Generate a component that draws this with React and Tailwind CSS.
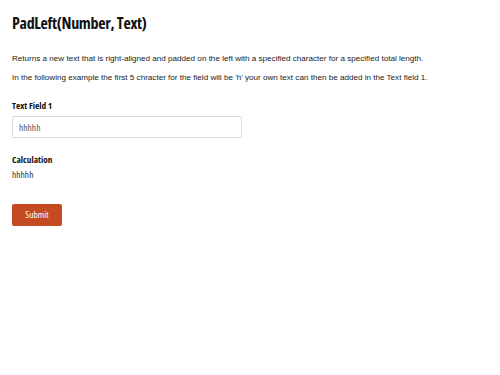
export default function App() {
  return (
    <div className="bg-white min-h-[375px] px-3 pt-[13px] text-[#222] font-['Liberation_Sans',Arial,sans-serif]">
      <h1 className="text-[16px] font-bold leading-[20px] text-[#111] tracking-[-0.3px] font-['Open_Sans','Noto_Sans',sans-serif] font-stretch-condensed">
        PadLeft(Number, Text)
      </h1>
      <p className="mt-[20px] text-[8.1px] leading-[12px]">
        Returns a new text that is right-aligned and padded on the left with a specified character for a specified total length.
      </p>
      <p className="mt-[7px] text-[8.1px] leading-[12px]">
        In the following example the first 5 chracter for the field will be 'h' your own text can then be added in the Text field 1.
      </p>
      <div className="mt-[16px] flex flex-col gap-[4px] font-['Open_Sans','Noto_Sans',sans-serif] font-stretch-condensed">
        <label className="block text-[9.3px] font-bold leading-[12px] text-[#111]">Text Field 1</label>
        <input
          type="text"
          defaultValue="hhhhh"
          className="block w-[230px] h-[22px] border border-[#dcdcdc] rounded-[1px] px-[6px] text-[9.5px] text-[#555] outline-none font-stretch-condensed"
        />
      </div>
      <div className="mt-[16px] flex flex-col gap-[3px] font-['Open_Sans','Noto_Sans',sans-serif] font-stretch-condensed">
        <div className="text-[9.3px] font-bold leading-[12px] text-[#111]">Calculation</div>
        <div className="text-[9.5px] leading-[12px] text-[#333]">hhhhh</div>
      </div>
      <button className="mt-[23px] block w-[50px] h-[22px] bg-[#c44a22] rounded-[2px] text-[9.5px] text-white font-['Open_Sans','Noto_Sans',sans-serif] font-stretch-condensed">
        Submit
      </button>
    </div>
  );
}
